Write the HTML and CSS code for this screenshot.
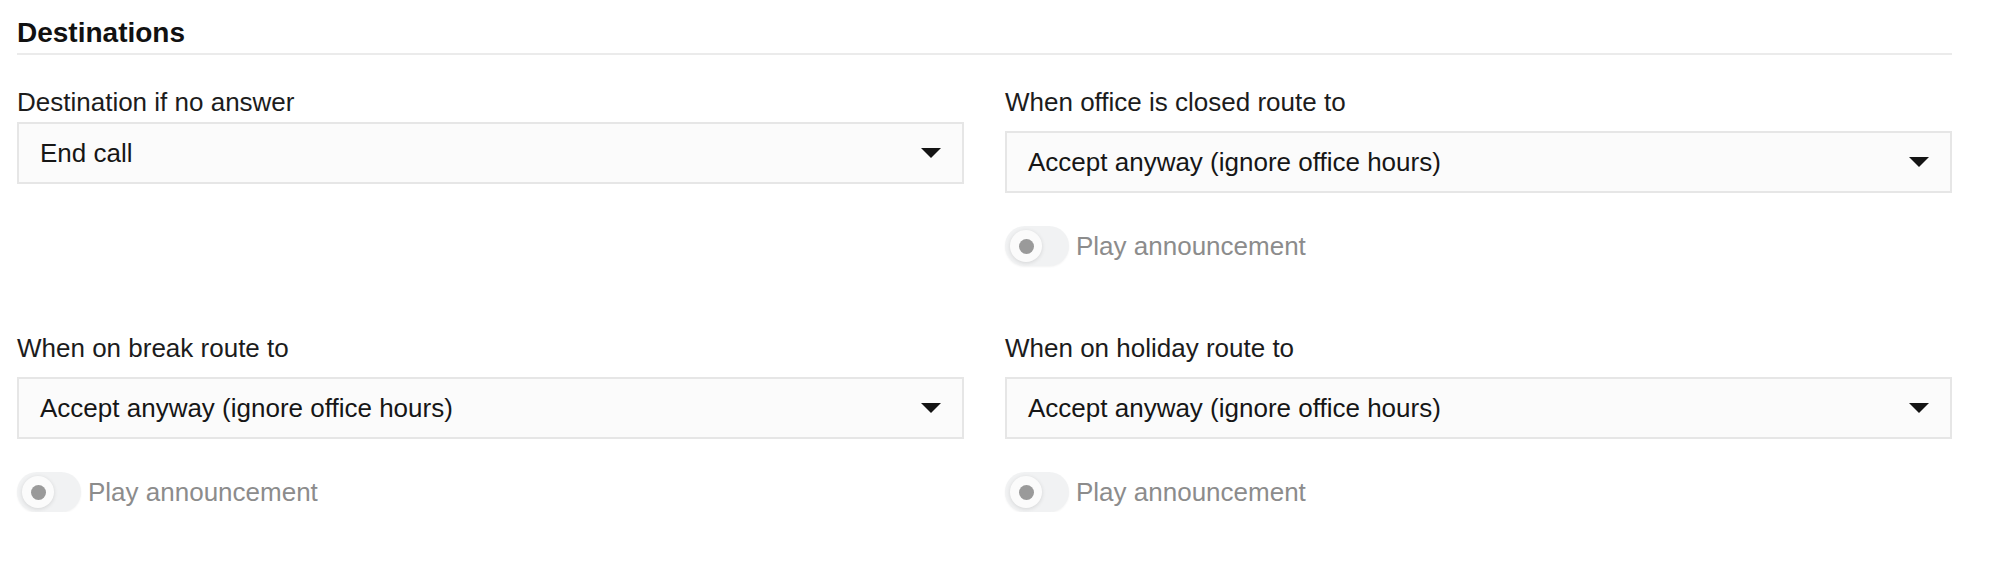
FILE: index.html
```html
<!DOCTYPE html>
<html lang="en">
<head>
<meta charset="utf-8">
<title>Destinations</title>
<link rel="stylesheet" href="styles.css">
</head>
<body>
<div class="page">
  <h2 class="section-title">Destinations</h2>
  <div class="grid">
    <div class="field">
      <div class="field-label">Destination if no answer</div>
      <div class="select select--tight">
        <span class="select-value">End call</span>
        <svg class="caret" width="20" height="10" viewBox="0 0 20 10"><path d="M0 0H20L10 10Z"/></svg>
      </div>
    </div>
    <div class="field">
      <div class="field-label">When office is closed route to</div>
      <div class="select">
        <span class="select-value">Accept anyway (ignore office hours)</span>
        <svg class="caret" width="20" height="10" viewBox="0 0 20 10"><path d="M0 0H20L10 10Z"/></svg>
      </div>
      <div class="toggle-row">
        <span class="toggle"><span class="knob"><span class="dot"></span></span></span>
        <span class="toggle-label">Play announcement</span>
      </div>
    </div>
    <div class="field">
      <div class="field-label">When on break route to</div>
      <div class="select">
        <span class="select-value">Accept anyway (ignore office hours)</span>
        <svg class="caret" width="20" height="10" viewBox="0 0 20 10"><path d="M0 0H20L10 10Z"/></svg>
      </div>
      <div class="toggle-row">
        <span class="toggle"><span class="knob"><span class="dot"></span></span></span>
        <span class="toggle-label">Play announcement</span>
      </div>
    </div>
    <div class="field">
      <div class="field-label">When on holiday route to</div>
      <div class="select">
        <span class="select-value">Accept anyway (ignore office hours)</span>
        <svg class="caret" width="20" height="10" viewBox="0 0 20 10"><path d="M0 0H20L10 10Z"/></svg>
      </div>
      <div class="toggle-row">
        <span class="toggle"><span class="knob"><span class="dot"></span></span></span>
        <span class="toggle-label">Play announcement</span>
      </div>
    </div>
  </div>
</div>
</body>
</html>
```

FILE: styles.css
```css
* { box-sizing: border-box; }

html, body {
  margin: 0;
  padding: 0;
  background: #ffffff;
}

body {
  font-family: "Liberation Sans", Arial, sans-serif;
  color: #1c1c1c;
}

.page {
  padding: 17px 40px 0 17px;
}

.section-title {
  margin: 0;
  font-size: 28px;
  line-height: 32px;
  font-weight: 700;
  color: #111111;
  padding-bottom: 4px;
  border-bottom: 2px solid #ebebeb;
}

.grid {
  margin-top: 32px;
  display: grid;
  grid-template-columns: 1fr 1fr;
  column-gap: 41px;
  row-gap: 67px;
  align-items: start;
}

.field {
  display: flex;
  flex-direction: column;
}

.field-label {
  font-size: 26px;
  line-height: 30px;
  color: #1c1c1c;
}

.select {
  margin-top: 14px;
  height: 62px;
  border: 2px solid #e6e6e6;
  background: #fbfbfb;
  display: flex;
  align-items: center;
  justify-content: space-between;
  padding: 0 21px;
}

.select--tight {
  margin-top: 5px;
}

.select-value {
  font-size: 26px;
  line-height: 30px;
  color: #161616;
}

.caret {
  display: block;
  fill: #141414;
  flex: none;
}

.toggle-row {
  margin-top: 33px;
  height: 40px;
  display: flex;
  align-items: center;
  gap: 7px;
}

.toggle {
  position: relative;
  width: 64px;
  height: 40px;
  border-radius: 20px;
  background: #f1f2f3;
  box-shadow: 0 1px 2px rgba(0, 0, 0, 0.05);
  flex: none;
}

.knob {
  position: absolute;
  left: 5px;
  top: 4px;
  width: 32px;
  height: 32px;
  border-radius: 50%;
  background: #fbfbfb;
  box-shadow: 0 1px 4px rgba(0, 0, 0, 0.12);
  display: flex;
  align-items: center;
  justify-content: center;
}

.dot {
  width: 15px;
  height: 15px;
  border-radius: 50%;
  background: #9a9a9a;
}

.toggle-label {
  font-size: 26px;
  line-height: 30px;
  color: #8c8c8c;
}
```
